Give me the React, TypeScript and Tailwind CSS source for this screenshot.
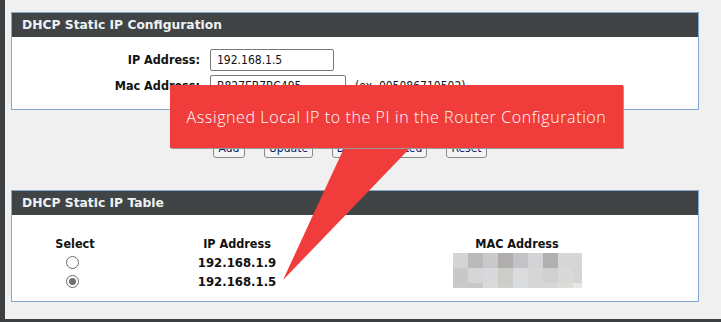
import React from "react";

const macBlocks = [
  ["#d4d4d4", "#bababa", "#c8c9cb", "#b0adac", "#c2c3c6", "#d4d4d6", "#b0b0b0", "#d6d6d4", "#d8d4d8"],
  ["#c8c8c6", "#d6d6d8", "#d8d9dc", "#cdcdc8", "#dadbdd", "#d6d6d6", "#cfd1d0", "#d9dad7", "#d7d3d7"],
  ["#cacac8", "#c8c8ca", "#dadada", "#cfcfca", "#dadddf", "#d6d6d8", "#d6d8d6", "#dcdcd8", "#e8e6ea"],
];

function Radio({ checked }: { checked?: boolean }) {
  return (
    <div className="w-[13px] h-[13px] rounded-full border border-[#6b6b6b] bg-white flex items-center justify-center">
      {checked && <div className="w-[7px] h-[7px] rounded-full bg-[#6f6f6f]" />}
    </div>
  );
}

function Btn({ children, w }: { children: React.ReactNode; w: string }) {
  return (
    <div
      className={`${w} h-[20px] border border-[#8a8a8a] rounded-[3px] bg-[#f4f4f4] flex items-center justify-center text-[12px] text-[#0a1a6a] font-['DejaVu_Sans_Condensed',sans-serif]`}
    >
      {children}
    </div>
  );
}

export default function App() {
  return (
    <div className="relative w-[721px] h-[322px] bg-[#f0f0f0] overflow-hidden flex flex-col font-['DejaVu_Sans_Condensed',sans-serif]">
      <div className="flex flex-1">
        <div className="w-[5px] bg-[#3c4042]" />
        <div className="flex-1 pl-[6px] pt-[12px]">
          {/* Panel 1 */}
          <div className="w-[688px] h-[98px] border border-[#84a7cc] bg-white flex flex-col">
            <div className="h-[24px] bg-[#404445] flex items-center pl-[10px] text-[12.3px] font-bold text-[#eef2f5] font-['DejaVu_Sans',sans-serif]">
              DHCP Static IP Configuration
            </div>
            <div className="pt-[12px] grid grid-cols-[188px_1fr] gap-x-[10px] gap-y-[4px] items-center">
              <div className="text-right text-[12.5px] font-bold text-[#111]">IP Address:</div>
              <div>
                <div className="w-[124px] h-[22px] border border-[#7a7a7a] rounded-[2px] flex items-center pl-[6px] text-[12px] text-[#111]">
                  192.168.1.5
                </div>
              </div>
              <div className="text-right text-[12.5px] font-bold text-[#111]">Mac Address:</div>
              <div className="flex items-center gap-[9px]">
                <div className="w-[136px] h-[22px] border border-[#7a7a7a] rounded-[2px] flex items-center pl-[6px] text-[12px] text-[#111]">
                  B827EB7BC495
                </div>
                <div className="text-[12px] text-[#111]">(ex. 005086710502)</div>
              </div>
            </div>
          </div>

          {/* Buttons */}
          <div className="mt-[28px] flex pl-[202px] gap-[19px]">
            <Btn w="w-[32px]">Add</Btn>
            <Btn w="w-[49px]">Update</Btn>
            <Btn w="w-[95px]">Delete Selected</Btn>
            <Btn w="w-[41px]">Reset</Btn>
          </div>

          {/* Panel 2 */}
          <div className="mt-[32px] w-[688px] h-[112px] border border-[#84a7cc] bg-white flex flex-col">
            <div className="h-[24px] bg-[#404445] flex items-center pl-[10px] text-[12.3px] font-bold text-[#eef2f5] font-['DejaVu_Sans',sans-serif]">
              DHCP Static IP Table
            </div>
            <div className="pt-[20px] grid grid-cols-[126px_198px_1fr] text-[12.5px] font-bold text-[#111]">
              <div className="h-[18px] flex items-center justify-center">Select</div>
              <div className="h-[18px] flex items-center justify-center">IP Address</div>
              <div className="h-[18px] flex items-center justify-center">MAC Address</div>

              <div className="h-[19px] flex items-center justify-center pr-[6px]">
                <Radio />
              </div>
              <div className="h-[19px] flex items-center justify-center text-[13px]">192.168.1.9</div>
              <div className="row-span-2 flex justify-center">
                <div className="flex flex-col">
                  {macBlocks.map((row, i) => (
                    <div key={i} className={`flex ${i === 2 ? "h-[5px]" : "h-[15px]"}`}>
                      {row.map((c, j) => (
                        <div
                          key={j}
                          className={j === 8 ? "w-[9px] h-full" : "w-[15px] h-full"}
                          style={{ backgroundColor: c }}
                        />
                      ))}
                    </div>
                  ))}
                </div>
              </div>

              <div className="h-[19px] flex items-center justify-center pr-[6px]">
                <Radio checked />
              </div>
              <div className="h-[19px] flex items-center justify-center text-[13px]">192.168.1.5</div>
            </div>
          </div>
        </div>
      </div>
      <div className="h-[3px] bg-[#3c4042]" />

      {/* Callout overlay */}
      <svg className="absolute left-0 top-0" width="721" height="322" viewBox="0 0 721 322">
        <polygon points="345,146 412,146 283,280" fill="#f13c3c" />
      </svg>
      <div className="absolute left-[170px] top-[85px] w-[453px] h-[63px] bg-[#f13c3c] shadow-[1px_1px_0_#9a9a9a] flex items-center justify-center">
        <span className="text-white text-[16px] font-light tracking-[0.6px] font-['Open_Sans',sans-serif]">
          Assigned Local IP to the PI in the Router Configuration
        </span>
      </div>
    </div>
  );
}
